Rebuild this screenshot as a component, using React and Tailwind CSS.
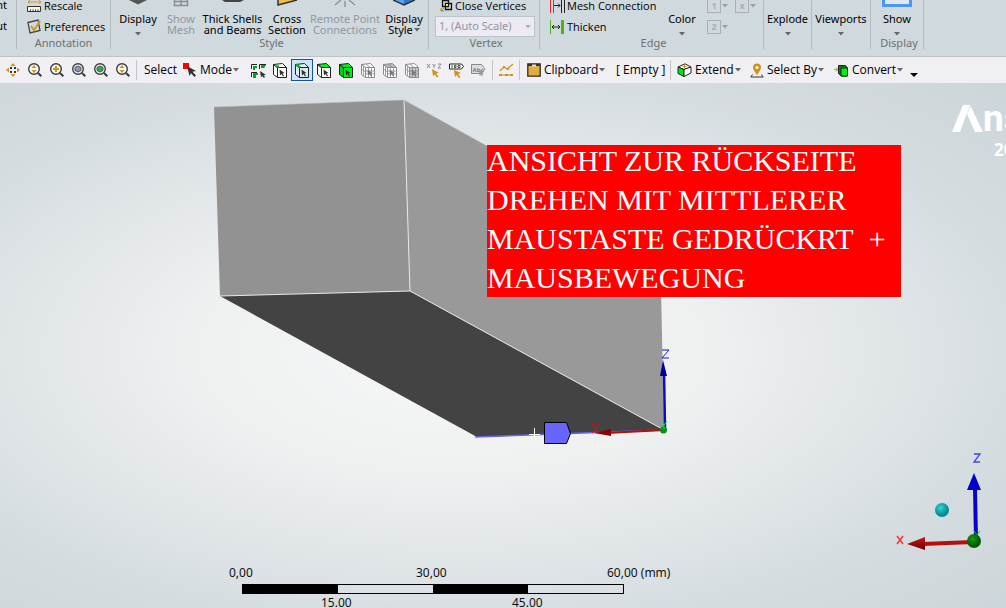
import React from "react";

function Caret({ className = "" }) {
  return (
    <svg width="6" height="4" viewBox="0 0 6 4" className={"shrink-0 " + className} aria-hidden="true">
      <path d="M0 0h6L3 3.5z" fill="currentColor" />
    </svg>
  );
}

function Group({ label, className = "", children, labelClass = "justify-center" }) {
  return (
    <section className={"flex h-[49px] shrink-0 flex-col border-r border-[#b3bbc0] " + className}>
      <div className="flex h-[37px] overflow-hidden">{children}</div>
      <div className={"flex h-3 items-center leading-3 text-[#6b7174] " + labelClass}>{label}</div>
    </section>
  );
}

function BigButton({ lines, icon, arrow, inlineArrow, disabled, className = "" }) {
  return (
    <button
      type="button"
      disabled={disabled}
      className={"flex h-[37px] shrink-0 flex-col items-center whitespace-nowrap " + (disabled ? "text-[#90989c] " : "text-black ") + className}
    >
      <span className="flex h-[13px] shrink-0 items-start">{icon}</span>
      {lines.map((line, i) => (
        <span key={line} className="flex h-[11px] shrink-0 items-center gap-px leading-[11px]">
          {line}
          {inlineArrow && i === lines.length - 1 && <Caret className="text-[#666]" />}
        </span>
      ))}
      {arrow && <Caret className="mt-2 text-[#666]" />}
    </button>
  );
}

function Row({ icon, children }) {
  return (
    <button type="button" className="flex h-[21px] shrink-0 items-center gap-0.5 whitespace-nowrap font-['Open_Sans',sans-serif] leading-[21px]">
      {icon}
      {children}
    </button>
  );
}

const Rows = ({ children, className = "" }) => (
  <div className={"flex flex-col items-start justify-end " + className}>{children}</div>
);

function BoxNumber({ children }) {
  return (
    <button type="button" disabled className="flex h-[21px] shrink-0 items-center gap-px text-[#9aa2a6]">
      <span className="flex size-[14px] items-center justify-center border border-current text-[9px] font-bold leading-none text-[#a8b0b4]">
        {children}
      </span>
      <Caret />
    </button>
  );
}

const RescaleIcon = () => (
  <svg width="15" height="16" viewBox="0 0 15 16">
    <path d="M1 4h13M3 2 1 4l2 2M12 2l2 2-2 2" stroke="#d39a18" fill="none" />
    <path d="M.5 8.500h13v5h-13zM3.500 13.500v-2M6 13.500v-2M8.500 13.500v-2M11 13.500v-2" stroke="#333" fill="#f4f4f4" />
  </svg>
);
const PreferencesIcon = () => (
  <svg width="15" height="15" viewBox="0 0 15 15">
    <path d="M1 3.500 11 1l2 10.500L3 14z" fill="none" stroke="#444" strokeWidth="1.300" />
    <path d="m4 7 3 4 6-9" fill="none" stroke="#d39a18" strokeWidth="2" />
  </svg>
);
const CloseVerticesIcon = () => (
  <svg width="13" height="13" viewBox="0 0 13 13">
    <path d="M2.500 1.500h6v6h-6zM5.500 4.500h6v6h-6z" fill="none" stroke="#111" strokeWidth="1.300" />
    <path d="M5.500 4.500h3v3h-3z" fill="#ffe04a" stroke="#111" />
    <path d="m1 12 3-3M1 9v3h3" stroke="#b98300" fill="none" />
  </svg>
);
const MeshConnectionIcon = () => (
  <svg width="15" height="15" viewBox="0 0 15 15">
    <path d="M.5 0v15M3.500 0v15" stroke="#e22" />
    <path d="M4 7.500h6M8 5.500l2 2-2 2" stroke="#222" fill="none" />
    <path d="M11.500 0v15M14.500 0v15" stroke="#222" />
  </svg>
);
const ThickenIcon = () => (
  <svg width="15" height="14" viewBox="0 0 15 14">
    <path d="M.5 0v14" stroke="#4fb317" />
    <path d="M2 7h8M4 5 2 7l2 2M8 5l2 2-2 2" stroke="#222" fill="none" />
    <path d="M11 0h3v14h-3z" fill="#4fb317" />
  </svg>
);

function Tool({ label, active, children, disabled }) {
  return (
    <button
      type="button"
      aria-label={label}
      disabled={disabled}
      className={"flex h-[22px] w-[22px] shrink-0 items-center justify-center " + (active ? "border border-[#1453a8] bg-[#cce4f7]" : "")}
    >
      {children}
    </button>
  );
}

function TextTool({ icon, children, arrow = true, className = "" }) {
  return (
    <button type="button" className={"flex h-[22px] shrink-0 items-center whitespace-nowrap " + className}>
      {icon}
      <span className="ml-[3px]">{children}</span>
      {arrow && <Caret className="ml-px text-[#666]" />}
    </button>
  );
}

const Divider = ({ className = "" }) => <span className={"h-5 w-px shrink-0 bg-[#c3c5ca] " + className} />;

function Magnifier({ children }) {
  return (
    <svg width="14" height="14" viewBox="0 0 14 14">
      <circle cx="6" cy="6" r="5.300" fill="#f7f7f7" stroke="#3c3c3c" strokeWidth="1.400" />
      <path d="m10 10 3.300 3.300" stroke="#3c3c3c" strokeWidth="2" />
      {children}
    </svg>
  );
}
const UpDown = () => <path d="M6 2 8.500 5h-5zM6 10 3.500 7h5z" fill="#cf9416" />;

function Cube({ top = "#fff", side = "#fff", front = "#fff", line = "#222", dot, grid, cursor = "#333" }) {
  return (
    <svg width="15" height="15" viewBox="0 0 15 15">
      <path d="M.5 1.500 4.500 4.500v10l-4-3z" fill={side} stroke={line} />
      <path d="M.5 1.500 9.500.5l4 4h-9z" fill={top} stroke={line} />
      <path d="M4.500 4.500h9v10h-9z" fill={front} stroke={line} />
      {grid && <path d="M4.500 8h9M4.500 11h9M7.500 4.500v10M10.500 4.500v10M2.500 3v10M.5 6l4 3M5 1l4 3.500" stroke={line} strokeWidth=".8" />}
      {dot && <path d={dot} stroke="#00b81c" strokeWidth="2.500" />}
      <path d="m6.500 6.500 5 3.500-2 .4 1.500 2.600-1 .6-1.500-2.500L7 12.500z" fill={cursor} />
    </svg>
  );
}

const MoveIcon = () => (
  <svg width="14" height="14" viewBox="0 0 14 14">
    <path d="m7 0 2.500 3h-5zM7 14l2.500-3h-5zM0 7l3-2.500v5zM14 7l-3-2.500v5z" fill="#cf9416" />
    <path d="M4 4h2v2H4zM8 4h2v2H8zM4 8h2v2H4zM8 8h2v2H8z" fill="#333" />
  </svg>
);
const ModeIcon = () => (
  <svg width="14" height="14" viewBox="0 0 14 14">
    <path d="M0 0h6v6H0z" fill="#f00" />
    <path d="m4 3 9 5-3.500.8L13 12.500 11.500 14 8 10.300 6.500 13z" fill="#333" />
  </svg>
);
const FilterIcon = () => (
  <svg width="17" height="15" viewBox="0 0 17 15">
    <path d="M1.500 6V1.500H7M9.500 6V1.500H16M1.500 14V9.500H7" stroke="#222" fill="none" />
    <path d="M3 3h4v2H5v2H3zM11 2h5l-2 3h-3zM3 10h5v2H6v3H3z" fill="#0a9e22" />
    <path d="m10 8 6 4-2.500.3L15 14l-1 1-2-2-1 1.500z" fill="#333" />
  </svg>
);
const XyzIcon = () => (
  <svg width="16" height="15" viewBox="0 0 16 15">
    <path d="m1 1 3 4m0-4L1 5M6.500 1 8 3l1.500-2M8 3v2M12 1h3l-3 4h3" stroke="#777" fill="none" strokeWidth=".8" />
    <path d="m6 6 7 4-3 .5 2.500 3-1.500 1-2.200-3L7 13z" fill="#cf9416" />
  </svg>
);
const CounterIcon = () => (
  <svg width="15" height="15" viewBox="0 0 15 15">
    <path d="M.5 1h12l2 2.500-2 2.500H.5z" fill="#fff" stroke="#222" />
    <path d="M3 2v3M5.500 2.500h1.500v2H5.500zM9 2.500h2v2H9z" stroke="#222" fill="none" strokeWidth=".8" />
    <path d="m5 7 7 3-3 1 2.500 3-1.500 1-2.200-3L6 14z" fill="#cf9416" />
  </svg>
);
const AbcIcon = () => (
  <svg width="15" height="14" viewBox="0 0 15 14">
    <path d="M.5 1.500h10l3.500 4.500-3.500 4.500H.5z" fill="#ddd" stroke="#888" />
    <text x="1.500" y="8.500" fontSize="6" fontWeight="700" fill="#777">Abc</text>
    <path d="m8 7 5 4-2 .5 1 2.500-2-2-1.500 1z" fill="#999" />
  </svg>
);
const ChartIcon = () => (
  <svg width="15" height="14" viewBox="0 0 15 14">
    <path d="m1 8 4-4 3 2 6-5M1 12h13" stroke="#cf9416" strokeWidth="1.200" fill="none" />
    <path d="M0 11h3v2H0zM6 11h3v2H6zM11 11h3v2h-3zM4 3h2v2H4zM8 5h2v2H8z" fill="#cf9416" />
  </svg>
);
const ClipboardIcon = () => (
  <svg width="14" height="14" viewBox="0 0 14 14">
    <path d="M.8.800h12.400v12.400H.8z" fill="#e2ad3c" stroke="#2b2b2b" strokeWidth="1.300" />
    <path d="M1 1h12v2H1z" fill="#333" />
    <path d="M5 1.500h4v2H5z" fill="#ddd" />
  </svg>
);
const ExtendIcon = () => (
  <svg width="15" height="14" viewBox="0 0 15 14">
    <path d="M1 4 8 .8 14 4 7 6.500z" fill="#fff" stroke="#222" />
    <path d="m1 4 6 2.500v7L1 10.500z" fill="#00e61c" stroke="#222" />
    <path d="m7 6.500 7-2.500v6l-7 3.500z" fill="#fff" stroke="#222" />
    <path d="M7.500 1.500v4M5.500 3.500h4" stroke="#cf9416" />
  </svg>
);
const PinIcon = () => (
  <svg width="14" height="15" viewBox="0 0 14 15">
    <path d="M2.500 11.500.8 14h12.400l-1.700-2.500" stroke="#333" fill="none" />
    <path d="M7 12.500C6 9.500 3 7.500 3 4.500a4 4 0 0 1 8 0c0 3-3 5-4 8z" fill="#cf9416" />
    <circle cx="7" cy="4.500" r="1.500" fill="#fff" />
  </svg>
);
const ConvertIcon = () => (
  <svg width="15" height="13" viewBox="0 0 15 13">
    <path d="M0 5.500h4M2 3.500l2 2-2 2" stroke="#cf9416" fill="none" />
    <path d="M4.500 1.500h7l2 2.500v8H7l-2.500-2.500z" fill="#087d12" stroke="#222" />
    <path d="M7 4h6.500v8H7z" fill="#00f01c" stroke="#222" />
  </svg>
);

function Ribbon() {
  return (
    <header className="flex h-14 shrink-0 overflow-hidden bg-[#d0d9de] text-[11px] text-black">
      <Group className="w-[17px]">
        <Rows className="w-[7px]">
          <button type="button" className="flex h-[21px] shrink-0 items-center self-end">nt</button>
          <button type="button" className="flex h-[21px] shrink-0 items-center self-end">ut</button>
        </Rows>
      </Group>
      <Group label="Annotation" className="w-[94px]">
        <Rows className="pl-[10px]">
          <Row icon={<RescaleIcon />}>Rescale</Row>
          <Row icon={<PreferencesIcon />}>Preferences</Row>
        </Rows>
      </Group>
      <Group label="Style" className="w-[318px]" labelClass="justify-center pl-1">
        <BigButton className="w-[54px]" lines={["Display"]} arrow icon={
          <svg width="18" height="5" viewBox="0 0 18 5"><path d="M0 0h18L9 4.500z" fill="#555" /></svg>} />
        <BigButton className="w-[32px]" disabled lines={["Show", "Mesh"]} icon={
          <svg width="16" height="7" viewBox="0 0 16 7"><path d="M1.500 0v5.500h13V0M8 0v5M1 1.500h13" fill="none" stroke="#888f93" strokeWidth="1.500" /></svg>} />
        <BigButton className="w-[71px]" lines={["Thick Shells", "and Beams"]} icon={
          <svg width="22" height="3" viewBox="0 0 22 3"><path d="M0 0h22l-4 2H3z" fill="#444" /></svg>} />
        <BigButton className="w-[38px]" lines={["Cross", "Section"]} icon={
          <svg width="22" height="7" viewBox="0 0 22 7"><path d="M2 0v5L21 0" fill="#efbd4b" stroke="#333" strokeWidth="1.500" /></svg>} />
        <BigButton className="w-[78px]" disabled lines={["Remote Point", "Connections"]} icon={
          <svg width="24" height="7" viewBox="0 0 24 7"><path d="M12 1v6M8 0 2 5M16 0l6 5" stroke="#8e969a" strokeWidth="1.500" /></svg>} />
        <BigButton className="w-[40px]" lines={["Display", "Style"]} inlineArrow icon={
          <svg width="22" height="6" viewBox="0 0 22 6"><path d="M0 0h11v5.500z" fill="#58a4ee" /><path d="M22 0H11v5.500z" fill="#2f75c8" /><path d="m0 0 11 5L22 0" fill="none" stroke="#333" strokeWidth="1.500" /></svg>} />
      </Group>
      <Group label="Vertex" className="w-[111px]" labelClass="justify-center pl-1">
        <Rows className="pl-[6px]">
          <div className="pl-[5px]"><Row icon={<CloseVerticesIcon />}>Close Vertices</Row></div>
          <div className="relative flex h-[21px] shrink-0 items-center">
            <select aria-label="Vertex scale" disabled className="h-[21px] w-[100px] appearance-none border border-[#bcc4cb] bg-[#eceaf2] pl-[3px] text-[11px] text-[#92979d] opacity-100">
              <option>1, (Auto Scale)</option>
            </select>
            <Caret className="pointer-events-none absolute right-1 text-[#b0b4ba]" />
          </div>
        </Rows>
      </Group>
      <Group label="Edge" className="w-[224px]" labelClass="justify-center pl-1">
        <Rows className="w-[124px] pl-[10px]">
          <Row icon={<MeshConnectionIcon />}>Mesh Connection</Row>
          <Row icon={<ThickenIcon />}>Thicken</Row>
        </Rows>
        <BigButton className="w-[36px]" lines={["Color"]} arrow />
        <div className="flex flex-col justify-end pl-[7px]">
          <div className="flex shrink-0 gap-[7px]"><BoxNumber>1</BoxNumber><BoxNumber>x</BoxNumber></div>
          <BoxNumber>2</BoxNumber>
        </div>
      </Group>
      <Group className="w-[48px]"><BigButton className="w-full" lines={["Explode"]} arrow /></Group>
      <Group className="w-[59px]"><BigButton className="w-full" lines={["Viewports"]} arrow /></Group>
      <Group label="Display" className="w-[53px]" labelClass="justify-center pl-1">
        <BigButton className="w-full" lines={["Show"]} arrow icon={
          <svg width="30" height="7" viewBox="0 0 30 7"><path d="M1.500 0v5.500h27V0" fill="#dce8f2" stroke="#4b97f0" strokeWidth="3" /></svg>} />
      </Group>
    </header>
  );
}

function Toolbar() {
  const grey = { line: "#8c8c90", cursor: "#77777a", grid: true };
  return (
    <nav aria-label="Graphics toolbar" className="flex h-[27px] shrink-0 items-center overflow-hidden border-t border-[#bfc3c8] bg-[#f0eff4] pl-0.5 font-['Open_Sans',sans-serif] text-[12px] text-black">
      <Tool label="Pan"><MoveIcon /></Tool>
      <Tool label="Zoom"><Magnifier><UpDown /></Magnifier></Tool>
      <Tool label="Zoom in"><Magnifier><path d="M6 3v6M3 6h6" stroke="#cf9416" strokeWidth="2" /></Magnifier></Tool>
      <Tool label="Zoom to fit"><Magnifier><path d="m6 3 3 1.500v3L6 9 3 7.500v-3z" fill="#8597c6" stroke="#555" /></Magnifier></Tool>
      <Tool label="Zoom to selection"><Magnifier><path d="m6 3 3 1.500v3L6 9 3 7.500v-3z" fill="#29b53b" stroke="#456" /></Magnifier></Tool>
      <Tool label="Box zoom"><Magnifier><UpDown /></Magnifier></Tool>
      <Divider className="ml-0.5" />
      <span className="ml-[7px] w-[39px]">Select</span>
      <TextTool icon={<ModeIcon />} className="w-[64px]">Mode</TextTool>
      <Tool label="Selection filter"><FilterIcon /></Tool>
      <Tool label="Vertex"><Cube dot="M3 3.500h3" /></Tool>
      <Tool label="Edge" active><Cube dot="m1 1.500 4 3" top="#e2f2fb" side="#e2f2fb" front="#d9ecf8" /></Tool>
      <Tool label="Face"><Cube top="#00f01c" /></Tool>
      <Tool label="Body"><Cube top="#00f01c" side="#00d01c" front="#00f01c" /></Tool>
      <Tool label="Node" disabled><Cube {...grey} /></Tool>
      <Tool label="Element face" disabled><Cube {...grey} top="#b9b9bc" /></Tool>
      <Tool label="Element" disabled><Cube {...grey} front="#c4c4c8" /></Tool>
      <Tool label="Coordinates"><XyzIcon /></Tool>
      <Tool label="Value"><CounterIcon /></Tool>
      <Tool label="Label" disabled><AbcIcon /></Tool>
      <Divider className="ml-[3px]" />
      <span className="ml-0.5 flex"><Tool label="Chart"><ChartIcon /></Tool></span>
      <Divider className="ml-0.5" />
      <TextTool icon={<ClipboardIcon />} className="ml-[7px] w-[89px]">Clipboard</TextTool>
      <span className="w-[54px] shrink-0 whitespace-nowrap">[ Empty ]</span>
      <Divider />
      <TextTool icon={<ExtendIcon />} className="ml-[6px] w-[73px]">Extend</TextTool>
      <TextTool icon={<PinIcon />} className="w-[84px]">Select By</TextTool>
      <TextTool icon={<ConvertIcon />} className="w-[76px]">Convert</TextTool>
      <button type="button" aria-label="More" className="flex h-[22px] items-end pb-1">
        <svg width="8" height="4" viewBox="0 0 8 4"><path d="M0 0h8L4 4z" fill="#000" /></svg>
      </button>
    </nav>
  );
}

function Model() {
  return (
    <svg className="absolute left-0 top-0" width="700" height="380" viewBox="0 83 700 380" aria-label="Model">
      <path d="M404 100 487 146 660 240 664 430 410 291z" fill="#999" />
      <path d="M214 107 404 100 410 291 220 296z" fill="#929292" />
      <path d="M220 296 410 291 664 430 477 437z" fill="#434343" />
      <path d="M404 100 410 291 664 430M220 296l190-5" fill="none" stroke="#e8e8e8" />
      <path d="M214 107 404 100 487 146" fill="none" stroke="#bbb" strokeWidth=".6" />
      <path d="m475 437 189-7" stroke="#6464e8" strokeWidth="1.500" />
      <path d="M534.500 428v11M529 434.500h11" stroke="#fff" />
      <path d="M544.500 422.500h22l4 11-4 10h-22z" fill="#6666ff" stroke="#000" />
      <path d="m664 430-57 3" stroke="#b50f0f" strokeWidth="2" />
      <path d="m594 433 17-4v7z" fill="#8b0000" />
      <path d="m592 424 7 9M599 424l-7 9" stroke="#f00" />
      <path d="m665 430-1-60" stroke="#0a0ac8" strokeWidth="2.500" />
      <path d="m663 360 4 16h-7z" fill="#00009b" />
      <path d="M662 350h7l-7 8h7" stroke="#1515dd" fill="none" />
      <circle cx="663.500" cy="430" r="3.500" fill="#0a8f1a" />
      <path d="m661 421 3 4 3-4M664 425v4" stroke="#0f2" fill="none" />
    </svg>
  );
}

function Triad() {
  return (
    <svg className="absolute bottom-[52px] right-4" width="100" height="106" viewBox="890 450 100 106" aria-label="Axes">
      <defs>
        <radialGradient id="cyan" cx=".4" cy=".35"><stop offset="0" stopColor="#2fd8d8" /><stop offset="1" stopColor="#078b94" /></radialGradient>
        <radialGradient id="green" cx=".4" cy=".35"><stop offset="0" stopColor="#12a012" /><stop offset="1" stopColor="#045a04" /></radialGradient>
        <linearGradient id="red" x1="0" y1="0" x2="0" y2="1"><stop offset="0" stopColor="#c61616" /><stop offset="1" stopColor="#6d0000" /></linearGradient>
      </defs>
      <path d="m976 540-1-52" stroke="#0505c4" strokeWidth="4" />
      <path d="m974 473 7 17h-14z" fill="#0000d0" />
      <path d="m973 542-50 2" stroke="#b41010" strokeWidth="4" />
      <path d="m907 544 18-7v13z" fill="url(#red)" />
      <path d="m974 531 3 4 3-4" stroke="#1bc41b" fill="none" />
      <circle cx="974" cy="541" r="7" fill="url(#green)" />
      <circle cx="942" cy="510" r="7" fill="url(#cyan)" />
      <path d="m897 536 6 8M903 536l-6 8" stroke="#f33" strokeWidth="1.500" />
      <path d="M974 454h6l-6 8h6" stroke="#4444ee" fill="none" strokeWidth="1.300" />
    </svg>
  );
}

function ScaleBar() {
  return (
    <div className="absolute bottom-0 left-[242px] h-[42px] w-[382px] text-[12px] leading-[14px] text-[#111]">
      <div className="flex h-[18px]">
        <span className="-ml-[13px] w-[187px] shrink-0">0,00</span>
        <span className="w-[191px] shrink-0">30,00</span>
        <span className="whitespace-nowrap">60,00 (mm)</span>
      </div>
      <div className="grid h-[10px] grid-cols-4 border border-black">
        <span className="bg-black" /><span /><span className="bg-black" /><span />
      </div>
      <div className="flex h-[14px] pl-[79px] pt-0.5">
        <span className="w-[191px]">15.00</span>
        <span>45.00</span>
      </div>
    </div>
  );
}

export default function App() {
  return (
    <div className="flex min-h-screen flex-col overflow-hidden font-['Noto_Sans','Open_Sans',sans-serif]">
      <Ribbon />
      <Toolbar />
      <main className="relative min-h-[525px] flex-1 overflow-hidden bg-[radial-gradient(ellipse_at_45%_51%,#f6f7f8_0%,#eff1f1_32%,#dfe4e7_58%,#d4dcdf_75%,#ccd5d9_100%)]">
        <Model />
        <div className="absolute left-[487px] top-[62px] w-[414px] bg-[#f00] font-['Liberation_Serif',serif] text-[30px] leading-[39px] text-white">
          <p className="-mt-1 whitespace-pre-line">
            {"ANSICHT ZUR RÜCKSEITE\nDREHEN MIT MITTLERER\nMAUSTASTE GEDRÜCKRT\u00a0 +\nMAUSBEWEGUNG"}
          </p>
        </div>
        <div className="absolute left-[952px] top-[22px] w-[110px] text-white">
          <div className="flex items-end">
            <svg width="31" height="28" viewBox="0 0 31 28" className="shrink-0">
              <path d="M0 27 11 0h7L8 27zM18.500 1 31 27h-8L15 9z" fill="#fff" />
            </svg>
            <span className="font-['Roboto',sans-serif] text-[37px] font-bold leading-7">nsys</span>
          </div>
          <div className="pl-[42px] pt-1.5 text-[17px] font-bold leading-[22px]">2021</div>
        </div>
        <Triad />
        <ScaleBar />
      </main>
    </div>
  );
}
